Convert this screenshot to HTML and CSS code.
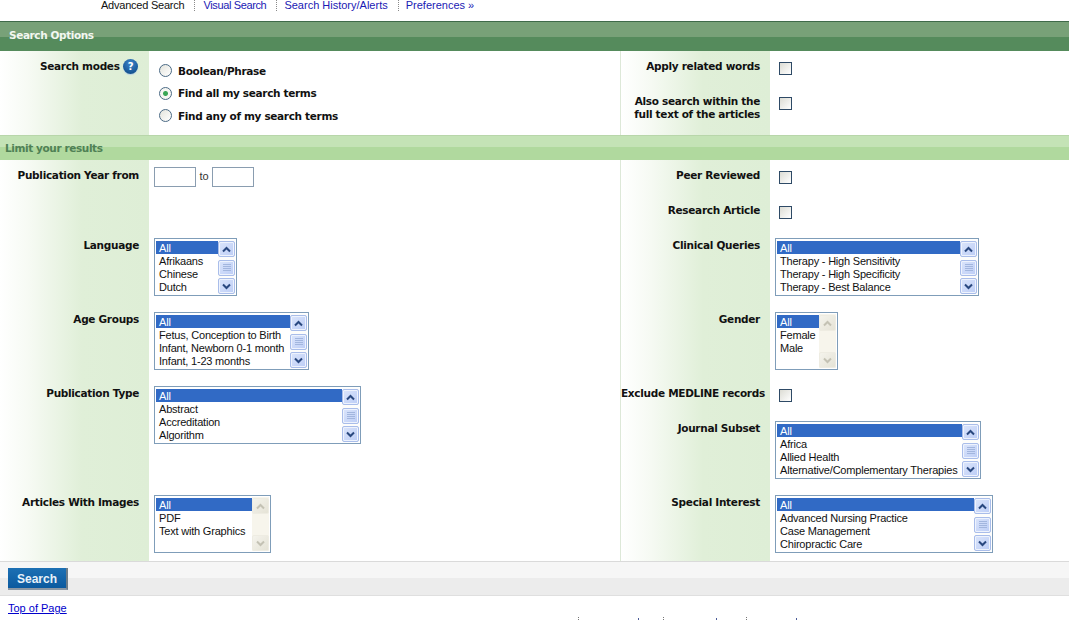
FILE: index.html
```html
<!DOCTYPE html>
<html lang="en">
<head>
<meta charset="utf-8">
<title>Advanced Search</title>
<link rel="stylesheet" href="styles.css">
</head>
<body>
<svg class="defs" width="0" height="0" aria-hidden="true">
  <symbol id="up" viewBox="0 0 9 7"><path d="M1 5.5 4.5 2 8 5.5" fill="none" stroke="currentColor" stroke-width="2"/></symbol>
  <symbol id="down" viewBox="0 0 9 7"><path d="M1 1.5 4.5 5 8 1.5" fill="none" stroke="currentColor" stroke-width="2"/></symbol>
  <symbol id="grip" viewBox="0 0 8 8"><path d="M0 .5h8M0 2.5h8M0 4.5h8M0 6.5h8" fill="none" stroke="currentColor"/></symbol>
</svg>
<nav class="tabs">
  <span class="tab current">Advanced Search</span>
  <a class="tab tight" href="#">Visual Search</a>
  <a class="tab" href="#">Search History/Alerts</a>
  <a class="tab" href="#">Preferences »</a>
</nav>

<h2 class="band band-dark">Search Options</h2>
<section class="columns">
  <div class="col col-left">
    <div class="row h84">
      <div class="lab">Search modes <span class="help">?</span></div>
      <div class="ctl radios">
        <label class="radio"><span class="dot"></span>Boolean/Phrase</label>
        <label class="radio"><span class="dot on"></span>Find all my search terms</label>
        <label class="radio"><span class="dot"></span>Find any of my search terms</label>
      </div>
    </div>
  </div>
  <div class="col col-right">
    <div class="row h35"><div class="lab">Apply related words</div><div class="ctl"><span class="check"></span></div></div>
    <div class="row h49"><div class="lab">Also search within the<br>full text of the articles</div><div class="ctl"><span class="check"></span></div></div>
  </div>
</section>

<h2 class="band band-light">Limit your results</h2>
<section class="columns">
  <div class="col col-left">
    <div class="row h70">
      <div class="lab">Publication Year from</div>
      <div class="ctl years"><span class="year"></span><span class="to">to</span><span class="year"></span></div>
    </div>
    <div class="row h74">
      <div class="lab">Language</div>
      <div class="ctl"><div class="list w83">
        <div class="opts"><div class="opt sel">All</div><div class="opt">Afrikaans</div><div class="opt">Chinese</div><div class="opt">Dutch</div></div>
        <div class="bar"><span class="btn"><svg width="9" height="7"><use href="#up"/></svg></span><span class="btn thumb"><svg width="8" height="8"><use href="#grip"/></svg></span><span class="btn"><svg width="9" height="7"><use href="#down"/></svg></span></div>
      </div></div>
    </div>
    <div class="row h74">
      <div class="lab">Age Groups</div>
      <div class="ctl"><div class="list w155">
        <div class="opts"><div class="opt sel">All</div><div class="opt">Fetus, Conception to Birth</div><div class="opt">Infant, Newborn 0-1 month</div><div class="opt">Infant, 1-23 months</div></div>
        <div class="bar"><span class="btn"><svg width="9" height="7"><use href="#up"/></svg></span><span class="btn thumb"><svg width="8" height="8"><use href="#grip"/></svg></span><span class="btn"><svg width="9" height="7"><use href="#down"/></svg></span></div>
      </div></div>
    </div>
    <div class="row h109">
      <div class="lab">Publication Type</div>
      <div class="ctl"><div class="list w207">
        <div class="opts"><div class="opt sel">All</div><div class="opt">Abstract</div><div class="opt">Accreditation</div><div class="opt">Algorithm</div></div>
        <div class="bar"><span class="btn"><svg width="9" height="7"><use href="#up"/></svg></span><span class="btn thumb"><svg width="8" height="8"><use href="#grip"/></svg></span><span class="btn"><svg width="9" height="7"><use href="#down"/></svg></span></div>
      </div></div>
    </div>
    <div class="row h74">
      <div class="lab">Articles With Images</div>
      <div class="ctl"><div class="list w117">
        <div class="opts"><div class="opt sel">All</div><div class="opt">PDF</div><div class="opt">Text with Graphics</div></div>
        <div class="bar off"><span class="btn"><svg width="9" height="7"><use href="#up"/></svg></span><span class="btn"><svg width="9" height="7"><use href="#down"/></svg></span></div>
      </div></div>
    </div>
  </div>
  <div class="col col-right">
    <div class="row h35"><div class="lab">Peer Reviewed</div><div class="ctl"><span class="check"></span></div></div>
    <div class="row h35"><div class="lab">Research Article</div><div class="ctl"><span class="check"></span></div></div>
    <div class="row h74">
      <div class="lab">Clinical Queries</div>
      <div class="ctl"><div class="list w204">
        <div class="opts"><div class="opt sel">All</div><div class="opt">Therapy - High Sensitivity</div><div class="opt">Therapy - High Specificity</div><div class="opt">Therapy - Best Balance</div></div>
        <div class="bar"><span class="btn"><svg width="9" height="7"><use href="#up"/></svg></span><span class="btn thumb"><svg width="8" height="8"><use href="#grip"/></svg></span><span class="btn"><svg width="9" height="7"><use href="#down"/></svg></span></div>
      </div></div>
    </div>
    <div class="row h74">
      <div class="lab">Gender</div>
      <div class="ctl"><div class="list w63">
        <div class="opts"><div class="opt sel">All</div><div class="opt">Female</div><div class="opt">Male</div></div>
        <div class="bar off"><span class="btn"><svg width="9" height="7"><use href="#up"/></svg></span><span class="btn"><svg width="9" height="7"><use href="#down"/></svg></span></div>
      </div></div>
    </div>
    <div class="row h35"><div class="lab">Exclude MEDLINE records</div><div class="ctl"><span class="check"></span></div></div>
    <div class="row h74">
      <div class="lab">Journal Subset</div>
      <div class="ctl"><div class="list w206">
        <div class="opts"><div class="opt sel">All</div><div class="opt">Africa</div><div class="opt">Allied Health</div><div class="opt">Alternative/Complementary Therapies</div></div>
        <div class="bar"><span class="btn"><svg width="9" height="7"><use href="#up"/></svg></span><span class="btn thumb"><svg width="8" height="8"><use href="#grip"/></svg></span><span class="btn"><svg width="9" height="7"><use href="#down"/></svg></span></div>
      </div></div>
    </div>
    <div class="row h74">
      <div class="lab">Special Interest</div>
      <div class="ctl"><div class="list w218">
        <div class="opts"><div class="opt sel">All</div><div class="opt">Advanced Nursing Practice</div><div class="opt">Case Management</div><div class="opt">Chiropractic Care</div></div>
        <div class="bar"><span class="btn"><svg width="9" height="7"><use href="#up"/></svg></span><span class="btn thumb"><svg width="8" height="8"><use href="#grip"/></svg></span><span class="btn"><svg width="9" height="7"><use href="#down"/></svg></span></div>
      </div></div>
    </div>
  </div>
</section>

<div class="actions"><button class="go" type="button">Search</button></div>
<p class="top"><a href="#">Top of Page</a></p>
<div class="legal"><span class="legal-item item-a"></span><span class="legal-item item-b"></span><span class="legal-item item-c"></span></div>
</body>
</html>
```
FILE: styles.css
```css
html, body {
  margin: 0;
  padding: 0;
  height: 620px;
  overflow: hidden;
  background: #fff;
  font-family: "Liberation Sans", Arial, sans-serif;
  font-size: 11px;
  color: #000;
}
.defs { display: block; height: 0; }

.tabs {
  height: 21px;
  padding-left: 101px;
  display: flex;
  align-items: flex-start;
  box-sizing: border-box;
  font-size: 11px;
  line-height: 11px;
}
.tab {
  color: #1a1ab4;
  text-decoration: none;
  padding-right: 10px;
  margin-right: 7px;
  height: 11px;
  border-right: 1px dotted #8a8a8a;
}
.tab.current { color: #111; letter-spacing: -.23px; margin-right: 8px; }
.tab.tight { letter-spacing: -.36px; }
.tab:last-child { border-right: 0; }

.band {
  margin: 0;
  font-family: "DejaVu Sans", Verdana, sans-serif;
  font-weight: bold;
  font-size: 10.5px;
  letter-spacing: -.4px;
}
.band-dark {
  height: 30px;
  box-sizing: border-box;
  border-top: 1px solid #3f6a4a;
  padding: 7px 0 0 9px;
  line-height: 13px;
  color: #f2f7f0;
  background: linear-gradient(#78a178 0, #78a178 15px, #558b5c 15px, #558b5c 100%);
}
.band-light {
  height: 25px;
  box-sizing: border-box;
  border-top: 1px solid #b8d6aa;
  padding: 6px 0 0 5px;
  line-height: 13px;
  color: #4f8155;
  background: linear-gradient(#c4e3b6 0, #c4e3b6 11px, #b0d99e 11px, #b0d99e 100%);
}

.columns { display: flex; }
.col-left { width: 620px; }
.col-right { flex: 1; }
.col-right .lab { width: 150px; border-left: 1px solid #dde8d8; }
.col-left .lab { width: 149px; }
.ctl { flex: 1; padding: 8px 0 0 5px; }

.row { display: flex; }
.h35 { height: 35px; }
.h49 { height: 49px; }
.h70 { height: 70px; }
.h74 { height: 74px; }
.h84 { height: 84px; }
.h109 { height: 109px; }

.lab {
  box-sizing: border-box;
  flex: none;
  padding: 9px 10px 0 0;
  text-align: right;
  white-space: nowrap;
  font-family: "DejaVu Sans", Verdana, sans-serif;
  font-weight: bold;
  font-size: 10.5px;
  letter-spacing: -.3px;
  line-height: 13px;
  color: #111;
  background: linear-gradient(90deg, #fff 0, #f6faf3 20%, #e0efd8 55%, #deeed6 100%);
}

.help {
  display: inline-block;
  vertical-align: top;
  width: 15px;
  height: 15px;
  margin-right: 1px;
  border-radius: 50%;
  background: radial-gradient(circle at 50% 30%, #3f86cc, #12508f 80%);
  box-shadow: 0 1px 1px #b7cfe4;
  color: #fff;
  text-align: center;
  font-size: 10px;
  line-height: 15px;
  position: relative;
  top: -1px;
}

.radios { padding: 8.5px 0 0 10px; display: flex; flex-direction: column; }
.radio {
  display: flex;
  align-items: center;
  flex: none;
  height: 22.5px;
  font-family: "DejaVu Sans", Verdana, sans-serif;
  font-weight: bold;
  font-size: 10.5px;
  letter-spacing: -.33px;
  color: #111;
}
.dot {
  box-sizing: border-box;
  width: 13px;
  height: 13px;
  margin-right: 6px;
  border-radius: 50%;
  border: 1px solid #4b6a85;
  background: linear-gradient(135deg, #e4e4dc, #fff);
}
.dot.on { background: radial-gradient(circle, #3aa655 0, #3aa655 2px, #f6f6f2 3px); }

.check {
  display: block;
  box-sizing: border-box;
  width: 13px;
  height: 13px;
  margin: 3px 0 0 4px;
  border: 1px solid #2e4a66;
  background: linear-gradient(135deg, #dcdcd4, #fff);
}

.years { display: flex; align-items: flex-start; padding-top: 7px; }
.year {
  box-sizing: border-box;
  width: 42px;
  height: 20px;
  background: #fff;
  border: 1px solid #8a9db0;
}
.to { width: 16px; text-align: center; padding-top: 3px; font-size: 11px; line-height: 13px; color: #333; }

.list {
  box-sizing: border-box;
  height: 58px;
  display: flex;
  border: 1px solid #7f9db9;
  padding: 2px 1px;
  background: #fff;
  font-family: "Liberation Sans", Arial, sans-serif;
  font-size: 11px;
  letter-spacing: -.2px;
  line-height: 14px;
  color: #111;
}
.w63 { width: 63px; }
.w83 { width: 83px; }
.w117 { width: 117px; }
.w155 { width: 155px; }
.w204 { width: 204px; }
.w206 { width: 206px; }
.w207 { width: 207px; }
.w218 { width: 218px; }

.opts { flex: 1; min-width: 0; overflow: hidden; }
.opt { height: 13px; padding-left: 3px; white-space: nowrap; }
.sel { background: #316ac5; color: #fff; }

.bar {
  flex: none;
  width: 17px;
  margin: -1px 0;
  padding-top: 1px;
  display: flex;
  flex-direction: column;
  justify-content: space-between;
  background: #fdfdfb;
}
.btn {
  box-sizing: border-box;
  height: 16px;
  display: flex;
  align-items: center;
  justify-content: center;
  border: 1px solid #a9bdea;
  border-radius: 2px;
  background: linear-gradient(135deg, #dbe5fb, #bccdf6);
  box-shadow: 0 0 0 1px #eef3fd inset;
  color: #29487f;
}
.thumb { color: #a2b6de; }
.bar.off { background: #f7f5ec; }
.bar.off .btn { background: linear-gradient(135deg, #f4f3ec, #e5e3d6); box-shadow: none; border-color: #eeece2; color: #c4c2b4; }

.actions {
  height: 35px;
  box-sizing: border-box;
  padding: 6px 0 0 8px;
  border-top: 1px solid #dadada;
  border-bottom: 1px solid #dfdfdf;
  background: linear-gradient(#f6f6f6 0, #f6f6f6 16px, #ececec 16px, #ececec 100%);
}
.go {
  display: block;
  width: 60px;
  height: 22px;
  padding: 1px 0 0;
  border: 0;
  border-right: 2px solid #6c7c88;
  border-bottom: 2px solid #8c98a4;
  background: linear-gradient(#1d70b4, #0b5a9f);
  color: #e8f2fa;
  font-family: "Liberation Sans", Arial, sans-serif;
  font-weight: bold;
  font-size: 12px;
}

.top { margin: 0; padding: 6px 0 0 8px; line-height: 13px; }
.top a { color: #0000cc; font-size: 11px; }

.legal { display: flex; margin-top: 2px; padding-left: 578px; height: 3px; }
.legal-item { box-sizing: border-box; height: 3px; border-left: 1px dotted #777; }
.legal-item::before { content: ""; display: block; width: 1px; height: 2px; margin-top: 1px; background: #4a5a98; }
.item-a { width: 85px; }
.item-a::before { margin-left: 59px; }
.item-b { width: 83px; }
.item-b::before { margin-left: 52px; }
.item-c { width: 60px; }
.item-c::before { margin-left: 49px; }
```
